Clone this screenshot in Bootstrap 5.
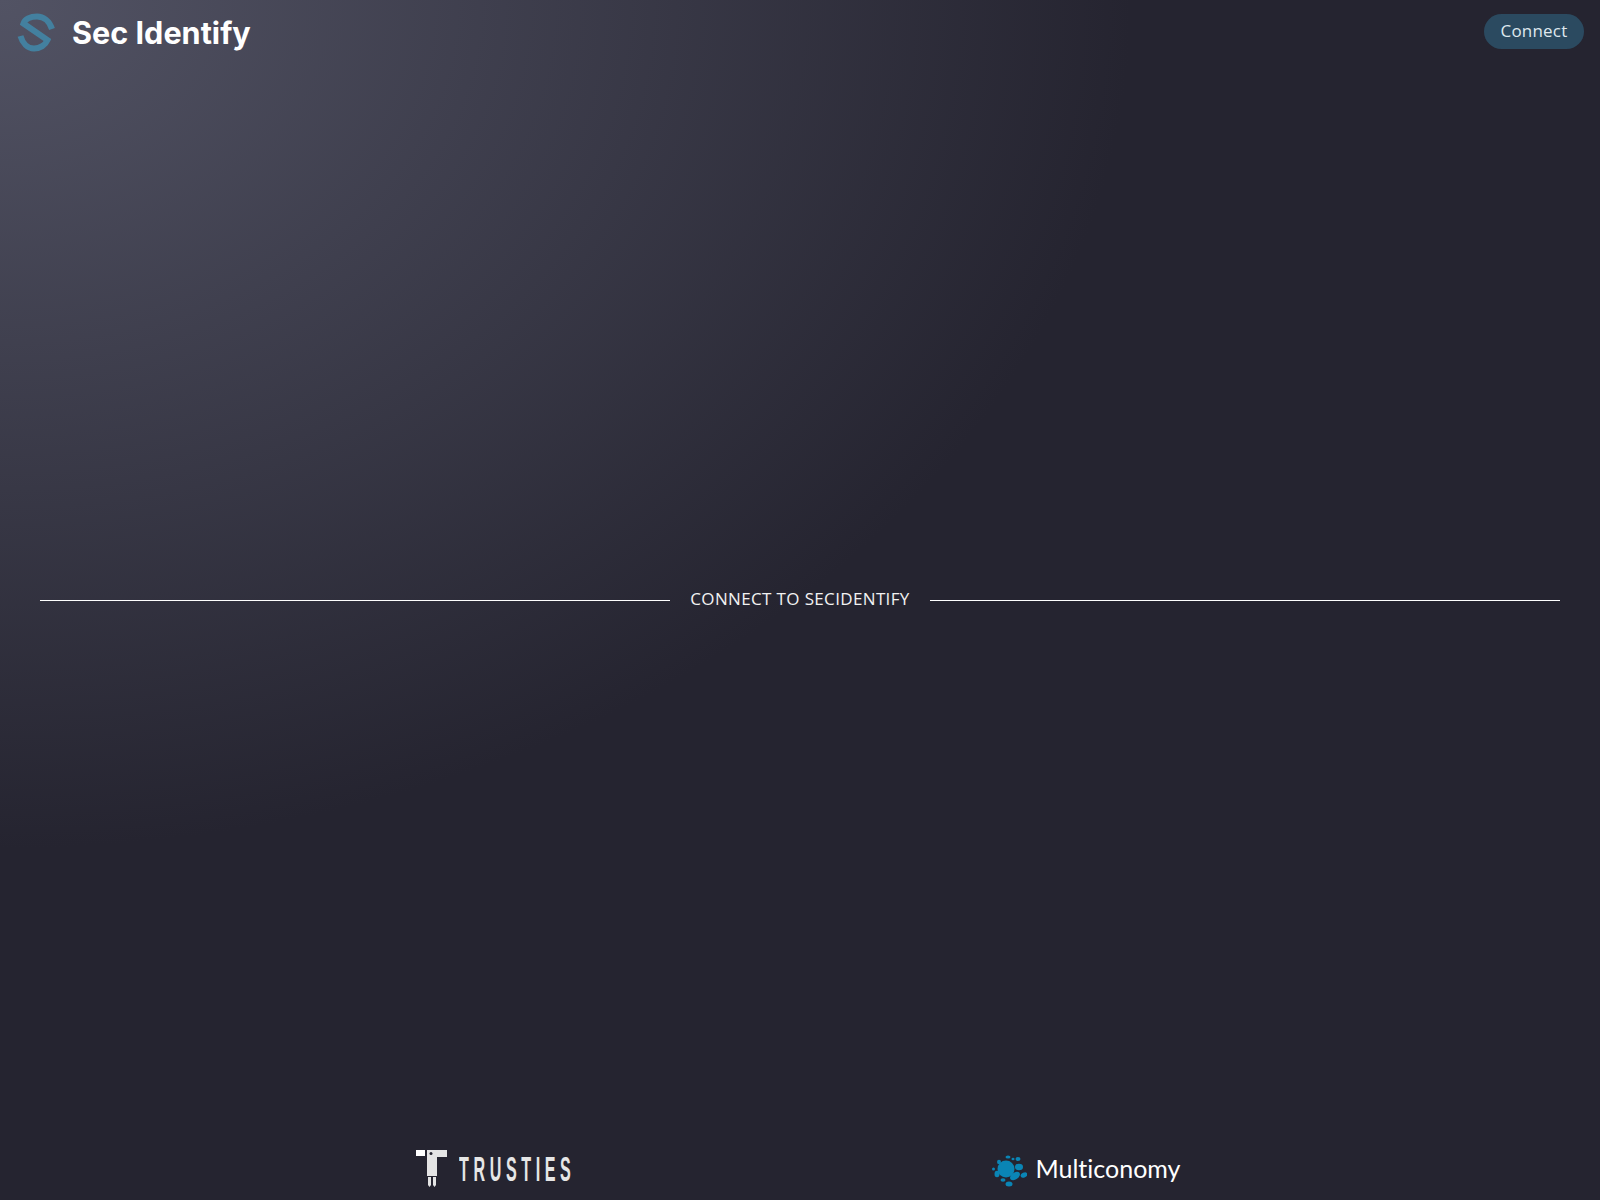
<!DOCTYPE html>
<html lang="en">
<head>
  <meta charset="UTF-8" />
  <meta name="viewport" content="width=device-width, initial-scale=1.0" />
  <title>Sec Identify</title>
  <link href="https://cdn.jsdelivr.net/npm/bootstrap@5.3.0/dist/css/bootstrap.min.css" rel="stylesheet">
  <style>
    body {
      min-height: 100vh;
      background: radial-gradient(ellipse at top left, #525364 0%, #252430 50%);
      background-color: #252430;
      font-family: "Inter", sans-serif;
    }
    .top-bar {
      height: 63px;
      padding: 0 16px;
    }
    .brand-name {
      font-family: "Inter", sans-serif;
      font-size: 30.6px;
      font-weight: 700;
      color: #fff;
      margin: 3px 0 0 16px;
      line-height: 1;
    }
    .btn-connect {
      width: 100px;
      height: 35px;
      padding: 0 0 2px;
      border: 0;
      border-radius: 18px;
      background-color: #2b4a60;
      color: #dfe8ee;
      font-family: "Open Sans", sans-serif;
      font-size: 17px;
      letter-spacing: .2px;
    }
    .btn-connect:hover {
      background-color: #2b4a60;
      color: #fff;
    }
    .connect-area {
      padding: 0 40px;
      gap: 20px;
      height: 1073px;
    }
    .connect-line {
      height: 1px;
      background-color: #fff;
      margin-top: 2px;
    }
    .connect-text {
      color: #f2f2f2;
      font-family: "Open Sans", sans-serif;
      font-size: 17px;
      letter-spacing: .35px;
      line-height: 24px;
      margin-bottom: 1px;
      white-space: nowrap;
    }
    .partners {
      height: 64px;
      gap: 420px;
      padding-right: 4px;
    }
    .trusties-box {
      width: 113px;
      margin: 2px 0 0 11px;
    }
    .trusties-name {
      display: inline-block;
      font-family: "Liberation Sans", sans-serif;
      font-size: 35px;
      font-weight: 700;
      letter-spacing: 10px;
      color: #e6e6e6;
      line-height: 1;
      white-space: nowrap;
      transform: scaleX(.46);
      transform-origin: left center;
    }
    .multi-icon {
      margin-top: 5px;
    }
    .multi-name {
      font-family: "Lato", sans-serif;
      font-size: 25px;
      font-variant-ligatures: none;
      color: #fff;
      margin-left: 9px;
      line-height: 1;
    }
  </style>
</head>
<body>
  <header class="top-bar d-flex align-items-center justify-content-between">
    <a href="#" class="d-flex align-items-center text-decoration-none">
      <svg width="40" height="42" viewBox="16 10 40 42" fill="none" stroke="#43809f" stroke-width="6">
        <path d="M52 28C49.500 20 43.500 15.500 37 15.500C30 15.500 25 18.500 23.500 22.500L47.500 39C45.500 44 40 47.500 34 47.500C27.500 47.500 22.500 42 20.500 35" />
      </svg>
      <span class="brand-name">Sec Identify</span>
    </a>
    <button type="button" class="btn btn-connect">Connect</button>
  </header>

  <main class="connect-area d-flex align-items-center">
    <div class="connect-line flex-grow-1"></div>
    <span class="connect-text">CONNECT TO SECIDENTIFY</span>
    <div class="connect-line flex-grow-1"></div>
  </main>

  <footer class="partners d-flex align-items-center justify-content-center">
    <a href="#" class="d-flex align-items-center text-decoration-none">
      <svg width="32" height="37" viewBox="0 0 32 37" fill="#e4e4e4">
        <rect x="0" y="0" width="9" height="6" fill="#fff" />
        <path d="M11 0H31V7H21V26H11Z" />
        <circle cx="15" cy="3.500" r="1.500" fill="#252430" />
        <path d="M12 27H15V35L13.500 37L12 35Z" />
        <path d="M17 27H20V35L18.500 37L17 35Z" />
      </svg>
      <span class="trusties-box"><span class="trusties-name">TRUSTIES</span></span>
    </a>
    <a href="#" class="d-flex align-items-center text-decoration-none">
      <svg class="multi-icon" width="35" height="32" viewBox="0 0 35 32" fill="#0a85b5">
        <circle cx="14" cy="14" r="8.500" />
        <ellipse cx="16" cy="2" rx="2.500" ry="1.500" />
        <ellipse cx="26" cy="4" rx="2.500" ry="2" />
        <ellipse cx="27" cy="12" rx="4" ry="3.200" />
        <ellipse cx="32" cy="20" rx="3.500" ry="2.500" transform="rotate(-25 32 20)" />
        <ellipse cx="23" cy="21" rx="5.500" ry="3.500" transform="rotate(-35 23 21)" />
        <ellipse cx="17" cy="29" rx="3.500" ry="2.500" />
        <ellipse cx="5" cy="19" rx="2.500" ry="3.200" />
        <ellipse cx="1.500" cy="14" rx="1.500" ry="1.500" />
        <ellipse cx="7" cy="7" rx="2" ry="2.200" />
        <ellipse cx="21" cy="4" rx="1.500" ry="1.200" />
        <ellipse cx="11" cy="25" rx="2.500" ry="1.800" />
      </svg>
      <span class="multi-name">Multiconomy</span>
    </a>
  </footer>
  <script src="https://cdn.jsdelivr.net/npm/bootstrap@5.3.0/dist/js/bootstrap.bundle.min.js"></script>
</body>
</html>
